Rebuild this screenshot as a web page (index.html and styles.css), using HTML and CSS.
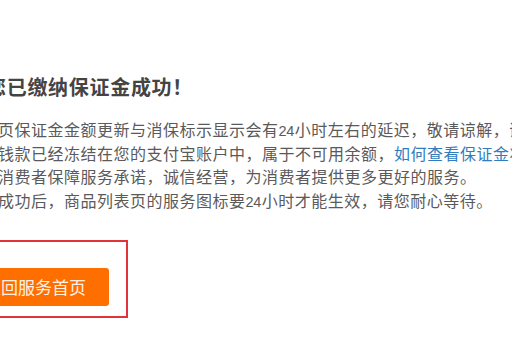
FILE: index.html
```html
<!DOCTYPE html>
<html lang="zh-CN">
<head>
<meta charset="utf-8">
<title>缴纳保证金成功</title>
<link rel="stylesheet" href="styles.css">
</head>
<body>
<div class="page">
  <h1 class="title">您已缴纳保证金成功！</h1>
  <ul class="notes">
    <li>页保证金金额更新与消保标示显示会有<span class="num">24</span>小时左右的延迟，敬请谅解，谢谢您的配合。</li>
    <li>钱款已经冻结在您的支付宝账户中，属于不可用余额，<a class="link" href="#">如何查看保证金状态？</a></li>
    <li>消费者保障服务承诺，诚信经营，为消费者提供更多更好的服务。</li>
    <li>成功后，商品列表页的服务图标要<span class="num">24</span>小时才能生效，请您耐心等待。</li>
  </ul>
  <div class="action">
    <a class="btn" href="#">返回服务首页</a>
  </div>
</div>
</body>
</html>
```

FILE: styles.css
```css
html, body {
  margin: 0;
  padding: 0;
  background: #ffffff;
}
body {
  width: 512px;
  height: 340px;
  overflow: hidden;
  font-family: "Noto Sans CJK SC", "Noto Sans", sans-serif;
  white-space: nowrap;
}
.page {
  margin-left: -14px;
  padding-top: 75px;
}
.title {
  margin: 0;
  font-size: 20px;
  line-height: 24px;
  font-weight: bold;
  letter-spacing: 0.7px;
  color: #444444;
}
.notes {
  list-style: none;
  margin: 19px 0 0 0;
  padding: 0 0 0 12px;
  font-size: 16px;
  line-height: 23.5px;
  letter-spacing: 0.5px;
  color: #5a5a5a;
}
.num {
  font-family: "Liberation Sans", sans-serif;
  font-size: 14.5px;
  line-height: 14px;
  letter-spacing: -0.4px;
  margin-right: 1px;
}
.link {
  color: #2f7dbd;
  text-decoration: none;
}
.action {
  display: flex;
  width: fit-content;
  margin: 28px 0 0 -44px;
  border: 2px solid #e2333c;
  padding: 26px 17px 10px 17px;
}
.btn {
  display: block;
  height: 38px;
  line-height: 38px;
  padding: 0 23px;
  background: #ff6f00;
  border-radius: 3px;
  color: #fff2e2;
  font-size: 17px;
  text-decoration: none;
}
```
